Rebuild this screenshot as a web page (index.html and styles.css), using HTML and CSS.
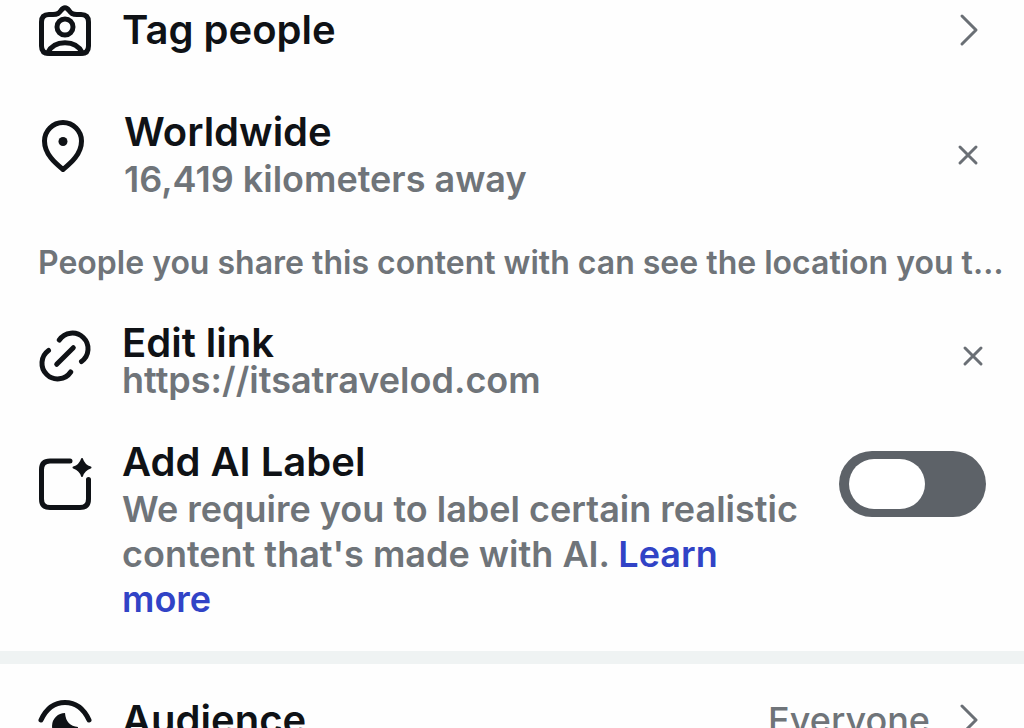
FILE: index.html
```html
<!DOCTYPE html>
<html lang="en">
<head>
<meta charset="utf-8">
<meta name="viewport" content="width=device-width, initial-scale=1">
<title>Post options</title>
<link rel="stylesheet" href="styles.css">
</head>
<body>
<main class="screen">
  <section class="group">
    <div class="row row-tag">
      <svg class="icon" viewBox="0 0 54 54" aria-hidden="true">
        <path d="M11 11.500H15C20 11.500 21 10 23 7.500Q27 2 31 7.500C33 10 34 11.500 39 11.500H43Q50.500 11.500 50.500 19V43Q50.500 50.500 43 50.500H11Q3.500 50.500 3.500 43V19Q3.500 11.500 11 11.500Z"/>
        <circle cx="27" cy="24" r="8"/>
        <path d="M9.500 50C13 43 20 39.800 27 39.800S41 43 44.500 50"/>
      </svg>
      <h2 class="title">Tag people</h2>
      <button class="action" type="button" aria-label="Open tag people">
        <svg class="glyph" viewBox="0 0 36 36" aria-hidden="true"><path d="M12 4L26 18L12 32"/></svg>
      </button>
    </div>

    <div class="row row-place">
      <svg class="icon" viewBox="0 0 54 54" aria-hidden="true">
        <path d="M25 50.500C19 45.500 6.500 36 6.500 22A18.500 18.500 0 0 1 43.500 22C43.500 36 31 45.500 25 50.500Z"/>
        <circle class="solid" cx="25" cy="22.500" r="4.500"/>
      </svg>
      <div class="text">
        <h2 class="title">Worldwide</h2>
        <p class="sub">16,419 kilometers away</p>
      </div>
      <button class="action" type="button" aria-label="Remove location">
        <svg class="glyph" viewBox="0 0 36 36" aria-hidden="true"><path d="M10 10L26 26M26 10L10 26"/></svg>
      </button>
    </div>

    <p class="note">People you share this content with can see the location you tag.</p>

    <div class="row row-link">
      <svg class="icon" viewBox="0 0 54 54" aria-hidden="true">
        <path d="M21.300 11A15.700 15.700 0 1 1 43.500 32.500M10.500 21.500A15.700 15.700 0 1 0 32.700 43M18.700 35.300L35.300 18.700"/>
      </svg>
      <div class="text">
        <h2 class="title">Edit link</h2>
        <p class="sub sub-link">https://itsatravelod.com</p>
      </div>
      <button class="action" type="button" aria-label="Remove link">
        <svg class="glyph" viewBox="0 0 36 36" aria-hidden="true"><path d="M10 10L26 26M26 10L10 26"/></svg>
      </button>
    </div>

    <div class="row row-ai">
      <svg class="icon" viewBox="0 0 54 54" aria-hidden="true">
        <path d="M32 4H12Q3.500 4 3.500 12.500V42Q3.500 50.500 12 50.500H42Q50.500 50.500 50.500 42V22.500"/>
        <path class="star" d="M44 2Q46 8.500 52.500 10.500Q46 12.500 44 19Q42 12.500 35.500 10.500Q42 8.500 44 2Z"/>
      </svg>
      <div class="text">
        <h2 class="title"><label for="ai-label">Add AI Label</label></h2>
        <p class="sub">We require you to label certain realistic content that's made with AI. <a class="more" href="#">Learn more</a></p>
      </div>
      <input class="switch" id="ai-label" type="checkbox" role="switch">
    </div>
  </section>

  <section class="group group-next">
    <div class="row row-audience">
      <svg class="icon" viewBox="0 0 54 54" aria-hidden="true">
        <path d="M3 21C9 8 18 3.500 27 3.500S45 8 51 21"/>
        <path class="solid" d="M27 14A13 13 0 1 0 40 28Q28 27 27 14Z"/>
        <path d="M3 33C9 46 18 50.500 27 50.500S45 46 51 33"/>
      </svg>
      <h2 class="title">Audience</h2>
      <span class="value">Everyone</span>
      <button class="action" type="button" aria-label="Choose audience">
        <svg class="glyph" viewBox="0 0 36 36" aria-hidden="true"><path d="M12 4L26 18L12 32"/></svg>
      </button>
    </div>
  </section>
</main>
</body>
</html>
```
FILE: styles.css
```css
* {
  box-sizing: border-box;
}

body {
  margin: 0;
  background: #fefefe;
  color: #0f1216;
  font-family: Inter, "Liberation Sans", sans-serif;
}

.screen {
  height: 100vh;
  overflow: hidden;
}

.group {
  padding-bottom: 29px;
}

.group-next {
  border-top: 13px solid #eff3f3;
}

.row {
  display: flex;
  align-items: center;
  gap: 30px;
  padding: 0 38px;
}

.row-tag {
  padding-top: 3px;
}

.row-place {
  gap: 32px;
  margin-top: 51px;
}

.row-link {
  margin-top: 36px;
  padding-right: 33px;
}

.row-ai {
  align-items: flex-start;
  margin-top: 45px;
}

.row-audience {
  padding-top: 23px;
}

.icon {
  flex: none;
  overflow: visible;
  width: 54px;
  height: 54px;
  fill: none;
  stroke: #0f1216;
  stroke-width: 5;
  stroke-linecap: round;
  stroke-linejoin: round;
}

.row-place .icon {
  margin-bottom: 18px;
}

.row-ai .icon {
  margin-top: 19px;
}

.row-audience .icon {
  margin-top: 12px;
}

.icon .solid {
  fill: #0f1216;
  stroke: none;
}

.icon .star {
  fill: #0f1216;
  stroke-width: 2;
}

.text {
  flex: 1;
  min-width: 0;
}

.title {
  flex: 1;
  margin: 0;
  font-size: 40px;
  font-weight: 600;
  line-height: 48px;
}

.sub {
  margin: 1px 0 0;
  color: #6f7479;
  font-size: 36px;
  font-weight: 600;
  line-height: 45px;
}

.sub-link {
  margin-top: 0;
  line-height: 26px;
}

.note {
  margin: 41px 12px 0 38px;
  overflow: hidden;
  color: #6f7479;
  font-size: 32px;
  font-weight: 600;
  line-height: 40px;
  text-overflow: ellipsis;
  white-space: nowrap;
}

.more {
  color: #3143c6;
  text-decoration: none;
}

.action {
  flex: none;
  display: flex;
  padding: 0;
  border: 0;
  background: none;
}

.glyph {
  width: 36px;
  height: 36px;
  fill: none;
  stroke: #6a6f75;
  stroke-width: 3;
  stroke-linecap: round;
  stroke-linejoin: round;
}

.value {
  margin-right: -10px;
  color: #6f7479;
  font-size: 36px;
  font-weight: 500;
}

.switch {
  flex: none;
  appearance: none;
  width: 147px;
  height: 66px;
  margin: 13px 0 0;
  padding: 8px 10px;
  border-radius: 33px;
  background: #5d6268;
}

.switch::before {
  content: "";
  display: block;
  width: 76px;
  height: 50px;
  border-radius: 25px;
  background: #fff;
}

.switch:checked::before {
  margin-left: auto;
}
```
